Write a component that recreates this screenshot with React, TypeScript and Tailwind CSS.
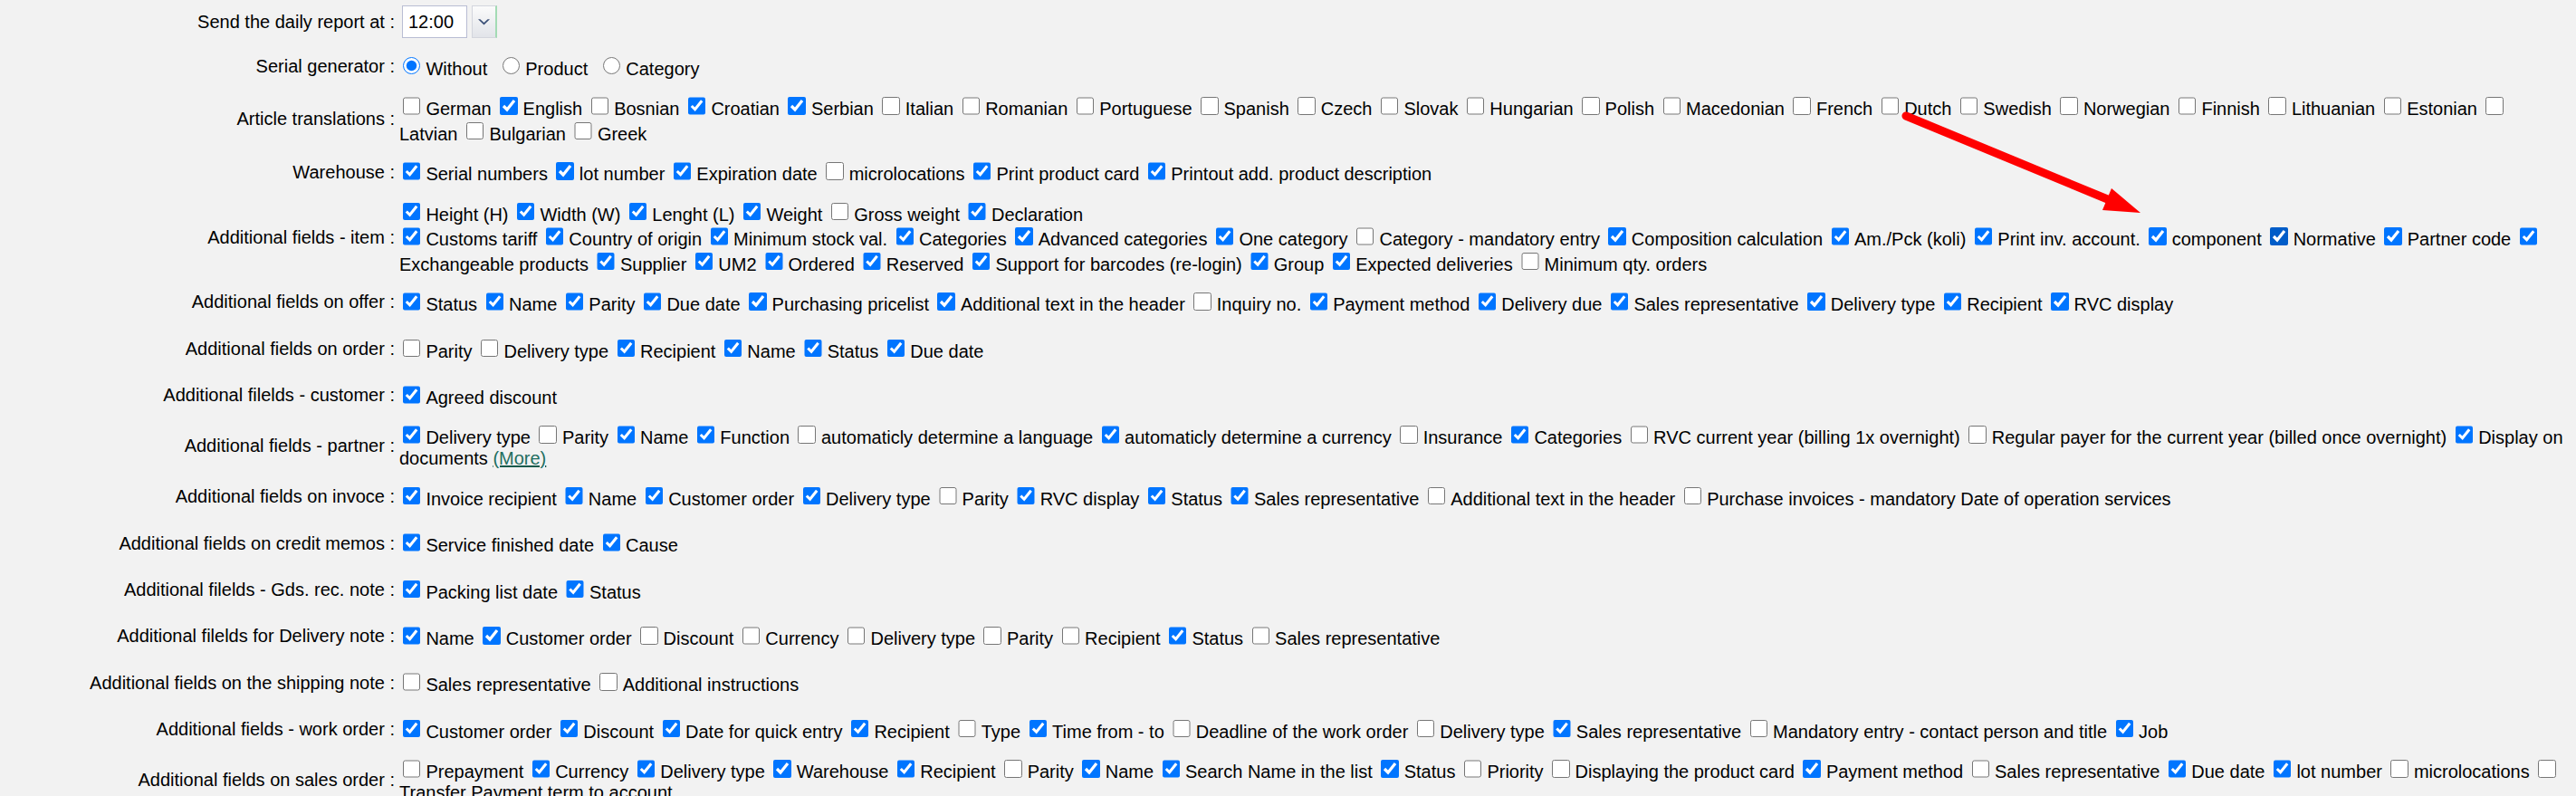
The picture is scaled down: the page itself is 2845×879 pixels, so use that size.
import React from "react";

type Row = { label: string; lines?: string[]; kind?: "select" | "radio" };

const rows: Row[] = [
  { label: "Send the daily report at :", kind: "select" },
  { label: "Serial generator :", kind: "radio" },
  {
    label: "Article translations :",
    lines: [
      "~o German ~x English ~o Bosnian ~x Croatian ~x Serbian ~o Italian ~o Romanian ~o Portuguese ~o Spanish ~o Czech ~o Slovak ~o Hungarian ~o Polish ~o Macedonian ~o French ~o Dutch ~o Swedish ~o Norwegian ~o Finnish ~o Lithuanian ~o Estonian ~o",
      "Latvian ~o Bulgarian ~o Greek",
    ],
  },
  {
    label: "Warehouse :",
    lines: [
      "~x Serial numbers ~x lot number ~x Expiration date ~o microlocations ~x Print product card ~x Printout add. product description",
    ],
  },
  {
    label: "Additional fields - item :",
    lines: [
      "~x Height (H) ~x Width (W) ~x Lenght (L) ~x Weight ~o Gross weight ~x Declaration",
      "~x Customs tariff ~x Country of origin ~x Minimum stock val. ~x Categories ~x Advanced categories ~x One category ~o Category - mandatory entry ~x Composition calculation ~x Am./Pck (koli) ~x Print inv. account. ~x component ~d Normative ~x Partner code ~x",
      "Exchangeable products ~x Supplier ~x UM2 ~x Ordered ~x Reserved ~x Support for barcodes (re-login) ~x Group ~x Expected deliveries ~o Minimum qty. orders",
    ],
  },
  {
    label: "Additional fields on offer :",
    lines: [
      "~x Status ~x Name ~x Parity ~x Due date ~x Purchasing pricelist ~x Additional text in the header ~o Inquiry no. ~x Payment method ~x Delivery due ~x Sales representative ~x Delivery type ~x Recipient ~x RVC display",
    ],
  },
  {
    label: "Additional fields on order :",
    lines: ["~o Parity ~o Delivery type ~x Recipient ~x Name ~x Status ~x Due date"],
  },
  { label: "Additional filelds - customer :", lines: ["~x Agreed discount"] },
  {
    label: "Additional fields - partner :",
    lines: [
      "~x Delivery type ~o Parity ~x Name ~x Function ~o automaticly determine a language ~x automaticly determine a currency ~o Insurance ~x Categories ~o RVC current year (billing 1x overnight) ~o Regular payer for the current year (billed once overnight) ~x Display on",
      "documents (More)",
    ],
  },
  {
    label: "Additional fields on invoce :",
    lines: [
      "~x Invoice recipient ~x Name ~x Customer order ~x Delivery type ~o Parity ~x RVC display ~x Status ~x Sales representative ~o Additional text in the header ~o Purchase invoices - mandatory Date of operation services",
    ],
  },
  { label: "Additional fields on credit memos :", lines: ["~x Service finished date ~x Cause"] },
  { label: "Additional filelds - Gds. rec. note :", lines: ["~x Packing list date ~x Status"] },
  {
    label: "Additional filelds for Delivery note :",
    lines: [
      "~x Name ~x Customer order ~o Discount ~o Currency ~o Delivery type ~o Parity ~o Recipient ~x Status ~o Sales representative",
    ],
  },
  {
    label: "Additional fields on the shipping note :",
    lines: ["~o Sales representative ~o Additional instructions"],
  },
  {
    label: "Additional fields - work order :",
    lines: [
      "~x Customer order ~x Discount ~x Date for quick entry ~x Recipient ~o Type ~x Time from - to ~o Deadline of the work order ~o Delivery type ~x Sales representative ~o Mandatory entry - contact person and title ~x Job",
    ],
  },
  {
    label: "Additional fields on sales order :",
    lines: [
      "~o Prepayment ~x Currency ~x Delivery type ~x Warehouse ~x Recipient ~o Parity ~x Name ~x Search Name in the list ~x Status ~o Priority ~o Displaying the product card ~x Payment method ~o Sales representative ~x Due date ~x lot number ~o microlocations ~o",
      "Transfer Payment term to account",
    ],
  },
];

function Box({ state }: { state: string }) {
  if (state === "d") {
    return (
      <input
        type="checkbox"
        defaultChecked
        className="m-[3px_6px_0.75px_3.9px] h-[19.5px] w-[19.5px] accent-[#005cc8]"
      />
    );
  }
  return (
    <input
      type="checkbox"
      defaultChecked={state !== "o"}
      className="m-[3px_6px_0.75px_3.9px] h-[19.5px] w-[19.5px]"
    />
  );
}

function Txt({ text }: { text: string }) {
  if (text.includes("(More)")) {
    const [a, b] = text.split("(More)");
    return (
      <>
        {a}
        <a className="cursor-pointer text-[#1f6e5f] underline decoration-[#14594b]">(More)</a>
        {b}
      </>
    );
  }
  return <>{text}</>;
}

function Line({ src }: { src: string }) {
  const parts = src.split("~");
  const out: React.ReactNode[] = [];
  if (parts[0]) out.push(<Txt key="p" text={parts[0]} />);
  parts.slice(1).forEach((p, i) => {
    out.push(<Box key={"b" + i} state={p[0]} />);
    const t = p.slice(2);
    if (t) out.push(<Txt key={"t" + i} text={t} />);
  });
  return <div className="whitespace-nowrap">{out}</div>;
}

function TimeSelect() {
  return (
    <div className="flex items-center">
      <div className="ml-[3px] flex h-[36px] w-[72px] items-center border border-[#b9bdd3] bg-white pl-[6px]">
        12:00
      </div>
      <div className="ml-[5px] flex h-[36px] w-[28px] items-center justify-center border border-[#d3d5dd] border-r-2 border-r-[#a3dbb4] bg-linear-to-b from-[#fbfbfb] to-[#e2e4e9]">
        <svg width="15" height="9" viewBox="0 0 15 9">
          <path d="M1 1.2 L7.5 7.6 L14 1.2 L11.6 1.2 L7.5 5 L3.4 1.2 Z" fill="#3c5178" />
        </svg>
      </div>
    </div>
  );
}

function Radios() {
  return (
    <div className="whitespace-nowrap">
      <input type="radio" name="sg" defaultChecked className="m-[3px_6px_0.75px_3.9px] h-[19.5px] w-[19.5px]" />
      Without{" "}
      <input type="radio" name="sg" className="m-[3px_6px_0.75px_11px] h-[19.5px] w-[19.5px]" />
      Product{" "}
      <input type="radio" name="sg" className="m-[3px_6px_0.75px_11px] h-[19.5px] w-[19.5px]" />
      Category
    </div>
  );
}

export default function App() {
  return (
    <div className="relative h-[879px] w-[2845px] overflow-hidden bg-[#f2f2f2] font-['Liberation_Sans',Arial,Helvetica,sans-serif] text-[20px] leading-[normal] text-black">
      <div className="flex flex-col">
        {rows.map((r, i) => (
          <div
            key={i}
            className={r.kind === "select" ? "flex min-h-[48px] items-center" : "flex min-h-[51.4px] items-center"}
          >
            <div className="w-[441px] shrink-0 whitespace-nowrap pr-[5px] text-right">{r.label}</div>
            <div className="min-w-0 flex-1 py-[5px]">
              {r.kind === "select" ? (
                <TimeSelect />
              ) : r.kind === "radio" ? (
                <Radios />
              ) : (
                r.lines!.map((l, j) => <Line key={j} src={l} />)
              )}
            </div>
          </div>
        ))}
      </div>
      <svg className="pointer-events-none absolute left-0 top-0" width="2845" height="879">
        <line x1="2105" y1="128" x2="2330" y2="221" stroke="#ff0000" strokeWidth="9" strokeLinecap="round" />
        <polygon points="2364,235 2322,232 2332,208" fill="#ff0000" />
      </svg>
    </div>
  );
}
